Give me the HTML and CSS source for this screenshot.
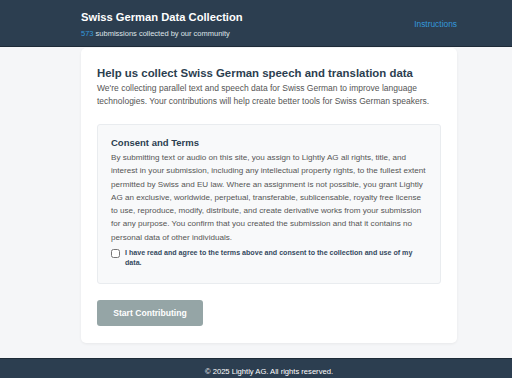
FILE: index.html
```html
<!DOCTYPE html>
<html lang="en">
<head>
    <meta charset="UTF-8">
    <meta name="viewport" content="width=device-width, initial-scale=1.0">
    <title>Swiss German Data Collection</title>
    <link rel="stylesheet" href="styles.css">
</head>
<body>
    <header class="site-header">
        <div class="wrap header-inner">
            <div class="brand">
                <h1>Swiss German Data Collection</h1>
                <p class="stats"><span class="count">573</span> submissions collected by our community</p>
            </div>
            <a class="nav-link" href="#">Instructions</a>
        </div>
    </header>

    <main class="wrap">
        <section class="card">
            <h2>Help us collect Swiss German speech and translation data</h2>
            <p class="intro">We're collecting parallel text and speech data for Swiss German to improve language technologies. Your contributions will help create better tools for Swiss German speakers.</p>

            <div class="consent">
                <h3>Consent and Terms</h3>
                <p>By submitting text or audio on this site, you assign to Lightly AG all rights, title, and interest in your submission, including any intellectual property rights, to the fullest extent permitted by Swiss and EU law. Where an assignment is not possible, you grant Lightly AG an exclusive, worldwide, perpetual, transferable, sublicensable, royalty free license to use, reproduce, modify, distribute, and create derivative works from your submission for any purpose. You confirm that you created the submission and that it contains no personal data of other individuals.</p>
                <label class="agree">
                    <input type="checkbox" id="agree">
                    <span>I have read and agree to the terms above and consent to the collection and use of my data.</span>
                </label>
            </div>

            <button id="start" class="btn" disabled>Start Contributing</button>
        </section>
    </main>

    <footer class="site-footer">
        <div class="wrap">
            <p>&copy; 2025 Lightly AG. All rights reserved.</p>
        </div>
    </footer>
</body>
</html>
```

FILE: styles.css
```css
body {
    font-family: 'Liberation Sans', Arial, sans-serif;
    background-color: #f5f6f8;
    color: #2c3e50;
    margin: 0;
    padding: 0;
}

.wrap {
    width: 376px;
    margin-left: 81px;
}

.site-header {
    background-color: #2c3e50;
    color: #fff;
    height: 46px;
    border-bottom: 1px solid #1e2b38;
}

.header-inner {
    display: flex;
    justify-content: space-between;
    align-items: center;
    height: 100%;
}

.brand {
    padding-top: 3px;
}

.brand h1 {
    font-size: 11.2px;
    margin: 0 0 5px;
    line-height: 14px;
}

.stats {
    font-size: 7.5px;
    line-height: 10px;
    margin: 0;
    color: #dfe4e8;
}

.count {
    color: #3498db;
}

.nav-link {
    color: #3498db;
    text-decoration: none;
    font-size: 8.4px;
    margin-top: 1px;
}

.card {
    background-color: #fff;
    border-radius: 5px;
    margin-top: 1px;
    padding: 18px 16px 17px;
    box-shadow: 0 1px 3px rgba(0, 0, 0, 0.06);
}

.card h2 {
    font-size: 11.4px;
    margin: 0 0 1px;
    line-height: 15px;
}

.intro {
    font-size: 8.5px;
    line-height: 13px;
    color: #555;
    margin: 0 0 16px;
}

.consent {
    background-color: #f8f9fa;
    border: 1px solid #e9ecef;
    border-radius: 3px;
    padding: 12px 13px 15px;
}

.consent h3 {
    font-size: 9.5px;
    margin: 0 0 2px;
    line-height: 12px;
}

.consent p {
    font-size: 8.1px;
    line-height: 13.3px;
    color: #555;
    margin: 0 0 4px;
}

.agree {
    display: flex;
    align-items: flex-start;
    gap: 5px;
    font-size: 7.1px;
    line-height: 10px;
    font-weight: bold;
    color: #34495e;
}

.agree input {
    width: 9px;
    height: 9px;
    margin: 1px 0 0;
    flex-shrink: 0;
}

.btn {
    margin-top: 16px;
    background-color: #95a5a6;
    color: #fff;
    border: none;
    border-radius: 3px;
    width: 106px;
    height: 26px;
    font-family: inherit;
    font-size: 8.6px;
    font-weight: bold;
}

.site-footer {
    background-color: #2c3e50;
    border-top: 1px solid #1e2b38;
    color: #fff;
    margin-top: 15px;
    padding: 8px 0 7px;
}

.site-footer p {
    margin: 0;
    text-align: center;
    font-size: 7.6px;
}
```
